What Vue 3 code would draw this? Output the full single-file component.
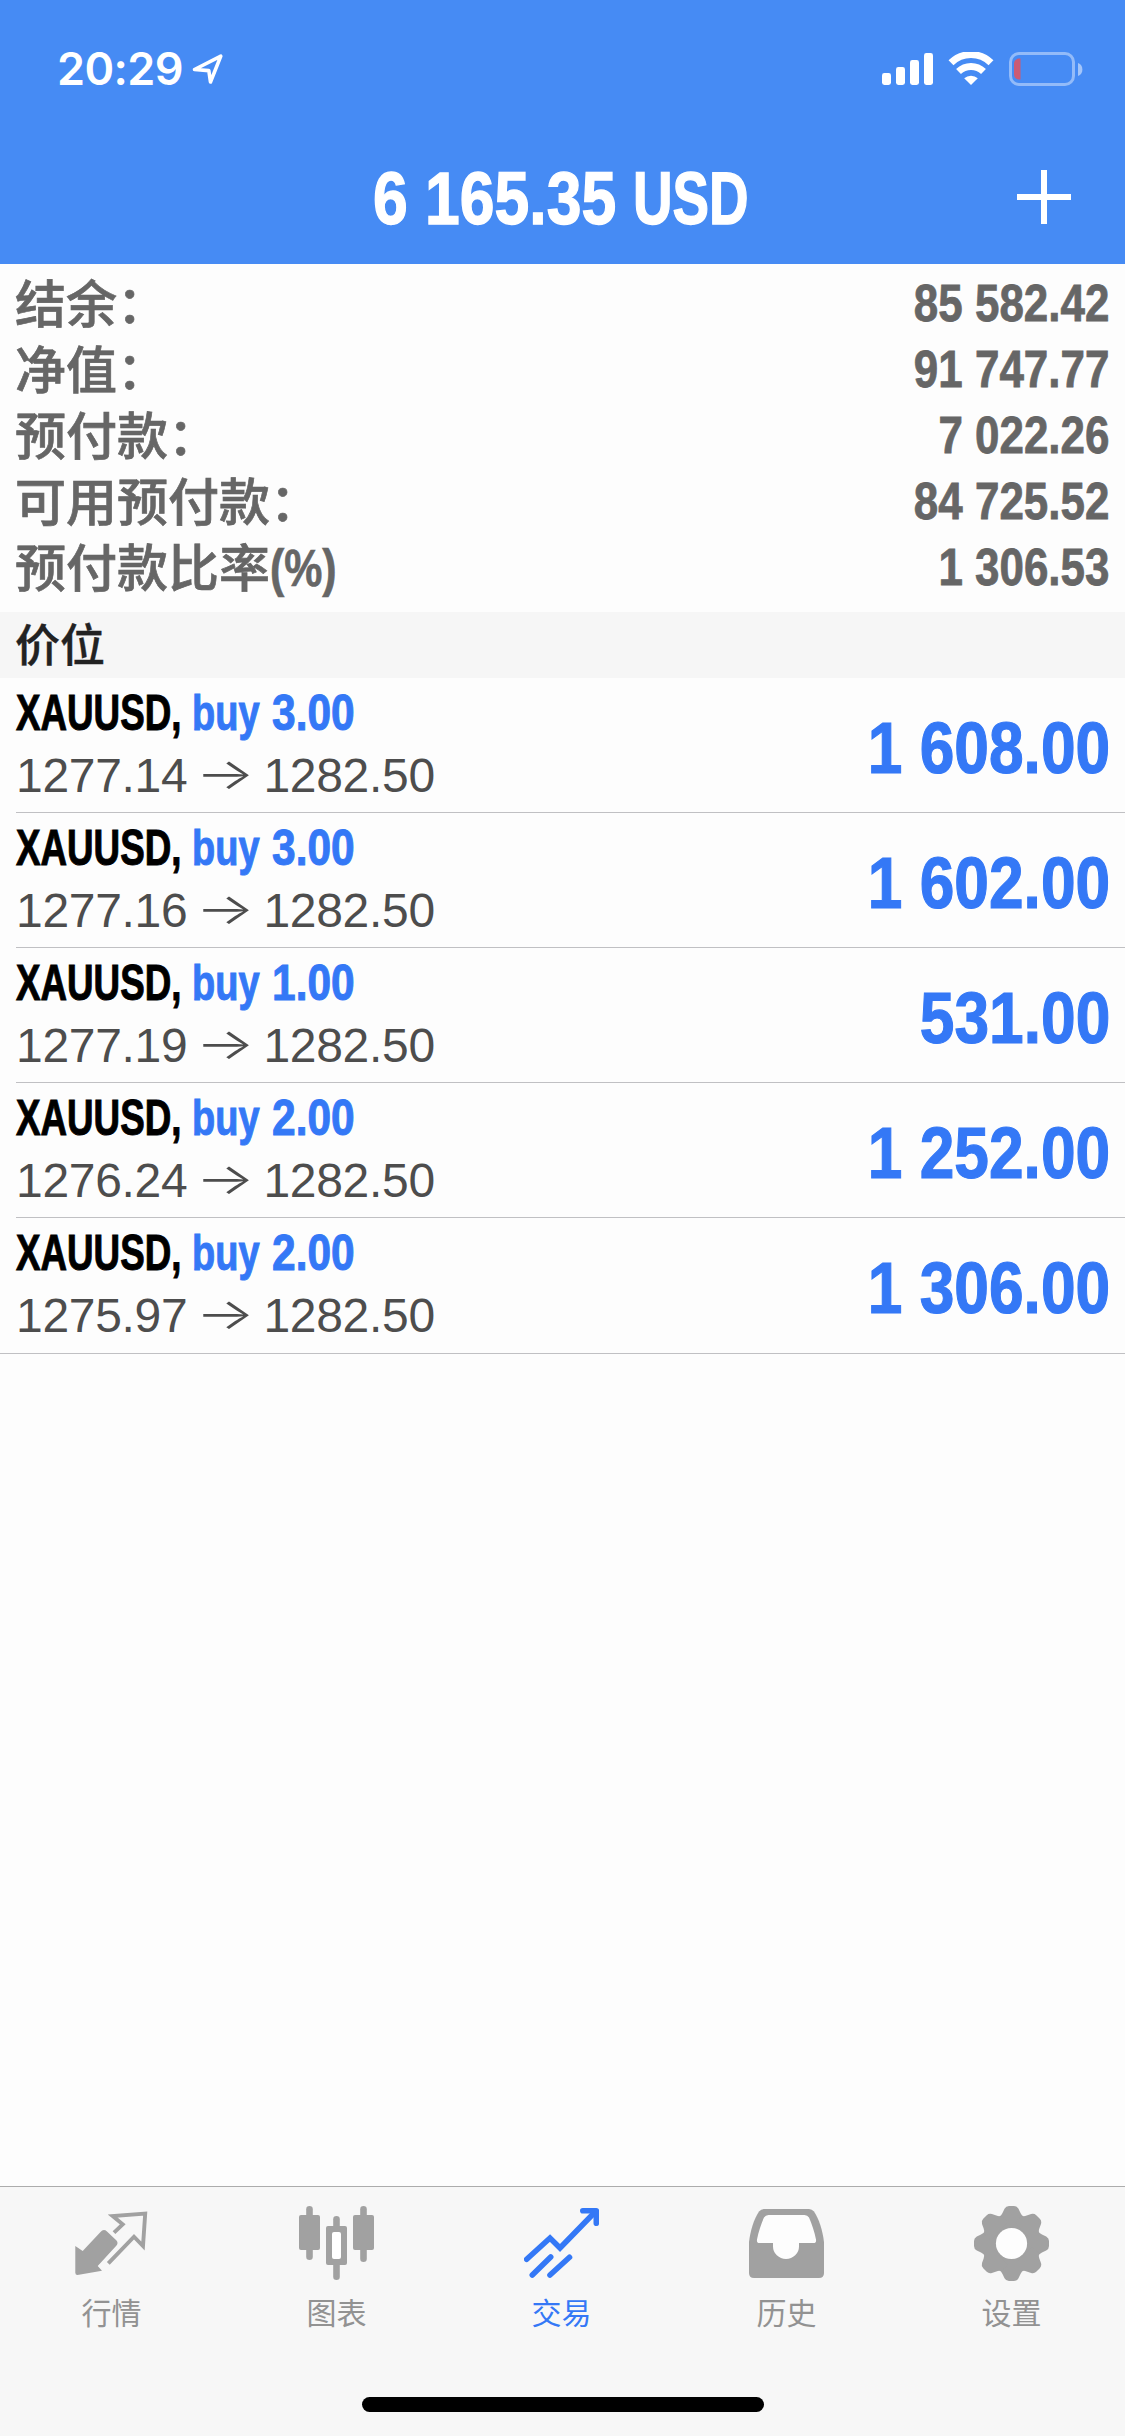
<script setup>
const summary = [
  { label: '结余：', value: '85 582.42' },
  { label: '净值：', value: '91 747.77' },
  { label: '预付款：', value: '7 022.26' },
  { label: '可用预付款：', value: '84 725.52' },
  { label: '预付款比率', suffix: '(%)', value: '1 306.53' },
]

const positions = [
  { volume: '3.00', open: '1277.14', current: '1282.50', profit: '1 608.00' },
  { volume: '3.00', open: '1277.16', current: '1282.50', profit: '1 602.00' },
  { volume: '1.00', open: '1277.19', current: '1282.50', profit: '531.00' },
  { volume: '2.00', open: '1276.24', current: '1282.50', profit: '1 252.00' },
  { volume: '2.00', open: '1275.97', current: '1282.50', profit: '1 306.00' },
]

const teeth = [0, 45, 90, 135, 180, 225, 270, 315]
</script>

<template>
  <div class="screen">
    <header class="header">
      <div class="status">
        <div class="status-left">
          <span class="time">20:29</span>
          <svg class="location" width="32" height="32" viewBox="0 0 32 32">
            <path d="M2.5 16.5 28.8 3.2 18.5 29 16.8 17.6Z" fill="none" stroke="#fff" stroke-width="3.6" stroke-linejoin="round" />
          </svg>
        </div>
        <div class="status-right">
          <svg width="52" height="34" viewBox="0 0 52 34" fill="#fff">
            <rect x="0" y="21" width="9" height="12" rx="2.4" />
            <rect x="14" y="15" width="9" height="18" rx="2.4" />
            <rect x="28" y="8" width="9" height="25" rx="2.4" />
            <rect x="42" y="1" width="9" height="32" rx="2.4" />
          </svg>
          <svg class="wifi" width="46" height="34" viewBox="0 0 46 34">
            <path d="M3 10.8A28.500 28.500 0 0 1 43 10.8" fill="none" stroke="#fff" stroke-width="7" />
            <path d="M10.5 19.6A18 18 0 0 1 35.5 19.6" fill="none" stroke="#fff" stroke-width="7" />
            <path d="M16.2 26.3A10 10 0 0 1 29.8 26.3L23 33Z" fill="#fff" />
          </svg>
          <svg class="battery" width="74" height="34" viewBox="0 0 74 34">
            <rect x="1.5" y="1.5" width="63" height="31" rx="8.5" fill="none" stroke="#fff" stroke-opacity=".42" stroke-width="3" />
            <path d="M69 11V24C72 23 73.4 20.500 73.4 17.500S72 12 69 11Z" fill="#fff" fill-opacity=".5" />
            <path d="M11.500 6.500V27.500H10Q5 27 5 22V12Q5 7 10 6.500Z" fill="#cc5b74" />
          </svg>
        </div>
      </div>
      <div class="nav">
        <h1 class="title">
          <span class="title-amount"><span class="digits">6 165.35</span></span>
          <span class="title-currency"><span class="letters">USD</span></span>
        </h1>
        <svg class="plus" width="54" height="54" viewBox="0 0 54 54" fill="#fff">
          <rect x="24" y="0" width="6" height="54" />
          <rect x="0" y="24" width="54" height="6" />
        </svg>
      </div>
    </header>

    <section class="summary">
      <div v-for="item in summary" :key="item.label" class="summary-row">
        <span class="summary-label">{{ item.label }}<span v-if="item.suffix" class="suffix">{{ item.suffix }}</span></span>
        <span class="summary-value">{{ item.value }}</span>
      </div>
    </section>

    <div class="section-title">价位</div>

    <ul class="positions">
      <li v-for="(p, i) in positions" :key="i" class="position">
        <div class="position-body">
          <div class="deal">
            <span class="symbol"><span class="letters">XAUUSD,</span></span>
            <span class="side"><span class="letters">buy</span></span>
            <span class="volume"><span class="digits">{{ p.volume }}</span></span>
          </div>
          <div class="prices">
            <span>{{ p.open }}</span>
            <span class="arrow">→</span>
            <span>{{ p.current }}</span>
          </div>
        </div>
        <span class="profit">{{ p.profit }}</span>
      </li>
    </ul>

    <footer class="footer">
      <nav class="tabs">
        <div class="tab">
          <svg width="75" height="75" viewBox="0 0 75 75">
            <g transform="translate(1 0)">
              <path d="M.3 40 7.700 45 25.500 26Q28.500 22.500 32 25.500L41.500 34.500Q43.500 37 41.500 39.500L22.700 60 27 64.700 2.500 69Q.3 69 .3 66.700Z" fill="#a1a1a1" />
              <path d="M39 26.700 47.700 18.300 37.700 10 70.200 7.600 68 40 59 30.700 33.300 57.300" fill="none" stroke="#a1a1a1" stroke-width="3.900" />
            </g>
          </svg>
          <span class="tab-label">行情</span>
        </div>
        <div class="tab">
          <svg width="75" height="75" viewBox="0 0 75 75" fill="#a1a1a1">
            <rect x="7.200" y="0" width="6.600" height="54" rx="3.300" />
            <rect x="0" y="9" width="21" height="35" rx="2" />
            <rect x="61.200" y="0" width="6.600" height="56" rx="3.300" />
            <rect x="54" y="9" width="21" height="35" rx="2" />
            <rect x="34.200" y="10" width="6.600" height="64" rx="3.300" />
            <rect x="27" y="20" width="21" height="39" rx="2" />
            <rect x="33" y="26" width="9" height="27" rx="2" fill="#fff" />
          </svg>
          <span class="tab-label">图表</span>
        </div>
        <div class="tab active">
          <svg width="75" height="75" viewBox="0 0 75 75" fill="none" stroke="#3478f6" stroke-width="5.600" stroke-linecap="round">
            <path d="M2.700 53.300 26 32 36 42 71.500 5.500" stroke-linejoin="miter" />
            <path d="M58.800 4.700H72.300V17.200" stroke-linejoin="round" />
            <path d="M8.300 69 26.700 51M26 69 45.500 51.300" />
          </svg>
          <span class="tab-label">交易</span>
        </div>
        <div class="tab">
          <svg width="75" height="75" viewBox="0 0 75 75">
            <path d="M0 36C1.500 24 5 13 10 5.500Q12 3 15 3H60Q63 3 65 5.500C70 13 73.500 24 75 36V67Q75 72 70 72H5Q0 72 0 67Z" fill="#a1a1a1" />
            <path d="M19.500 9H55.500Q58.500 9 60 11.500C63 18 65.500 26 67 33.500Q67.500 37 64.500 37H50V40.500A13 12.500 0 0 1 24 40.500V37H10.500Q7.500 37 8 33.500C9.500 26 12 18 15 11.500Q16.500 9 19.500 9Z" fill="#fdfdfd" />
          </svg>
          <span class="tab-label">历史</span>
        </div>
        <div class="tab">
          <svg width="75" height="75" viewBox="0 0 75 75">
            <g fill="#a1a1a1">
              <circle cx="37.500" cy="37.500" r="28.500" />
              <path
                v-for="angle in teeth"
                :key="angle"
                d="M25 11Q27.500 9.500 28.500 7L30.500 2.800Q32 0 35 0H40Q43 0 44.500 2.800L46.500 7Q47.500 9.500 50 11V20H25Z"
                :transform="`rotate(${angle} 37.5 37.5)`"
              />
            </g>
            <circle cx="37.500" cy="37.500" r="15.600" fill="#fdfdfd" />
          </svg>
          <span class="tab-label">设置</span>
        </div>
      </nav>
      <div class="home-indicator"></div>
    </footer>
  </div>
</template>

<style>
body {
  margin: 0;
  background: #fdfdfd;
}
</style>

<style scoped>
.screen {
  width: 1125px;
  height: 2436px;
  display: flex;
  flex-direction: column;
  overflow: hidden;
  background: #fdfdfd;
  font-family: "Liberation Sans", "Noto Sans CJK SC", sans-serif;
  white-space: nowrap;
}

.header {
  height: 264px;
  flex: none;
  background: #468bf4;
  color: #fff;
}

.status {
  height: 132px;
  box-sizing: border-box;
  padding: 52px 42px 0 57px;
  display: flex;
  justify-content: space-between;
  align-items: flex-start;
}

.status-left,
.status-right {
  display: flex;
  height: 34px;
  align-items: center;
}

.time {
  width: 135px;
  font: 600 45px/34px "Inter", sans-serif;
  letter-spacing: -0.6px;
}

.wifi {
  margin-left: 14px;
}

.battery {
  margin-left: 15px;
}

.nav {
  height: 132px;
  box-sizing: border-box;
  padding: 0 54px 0 373px;
  display: flex;
  align-items: center;
  justify-content: space-between;
}

.title {
  margin: 2px 0 0;
  display: flex;
  font-size: 73.5px;
  line-height: 84px;
  font-weight: 700;
  -webkit-text-stroke: 1.4px currentColor;
}

.title-amount {
  width: 260px;
}

.title-currency {
  width: 120px;
}

.digits,
.letters {
  display: inline-block;
  transform: scaleX(0.85);
  transform-origin: left center;
}

.letters {
  transform: scaleX(0.745);
}

.plus {
  margin-top: -2px;
}

.summary {
  flex: none;
  height: 348px;
  box-sizing: border-box;
  padding: 6px 16px 0 15px;
  color: #666;
}

.summary-row {
  height: 66px;
  display: flex;
  justify-content: space-between;
  align-items: center;
}

.summary-label {
  padding-top: 5px;
  font-size: 51px;
  line-height: 61px;
  font-weight: 500;
  -webkit-text-stroke: 0.7px currentColor;
}

.suffix {
  display: inline-block;
  font-weight: 700;
  transform: translateY(-1px) scaleX(0.84);
  transform-origin: left center;
}

.summary-value {
  font-size: 52px;
  line-height: 66px;
  font-weight: 700;
  -webkit-text-stroke: 0.8px currentColor;
  transform: scaleX(0.845);
  transform-origin: right center;
}

.section-title {
  flex: none;
  height: 66px;
  padding-left: 15px;
  background: #f6f6f6;
  color: #222;
  font: 500 45px/62px "Noto Sans CJK SC", sans-serif;
  -webkit-text-stroke: 0.4px currentColor;
}

.positions {
  margin: 0;
  padding: 0;
  list-style: none;
  border-bottom: 1px solid #c0c0c3;
}

.position {
  height: 134px;
  margin-left: 16px;
  padding-right: 15px;
  display: flex;
  justify-content: space-between;
  border-bottom: 1px solid #c0c0c3;
}

.position:last-child {
  border-bottom-color: transparent;
}

.position-body {
  padding-top: 4px;
}

.deal {
  display: flex;
  font-size: 50px;
  line-height: 62px;
  font-weight: 700;
  color: #3478f6;
  -webkit-text-stroke: 1px currentColor;
}

.symbol {
  width: 176px;
  color: #000;
}

.symbol .letters {
  transform: scaleX(0.735);
}

.side {
  width: 80px;
}

.side .letters {
  transform: scaleX(0.76);
}

.volume {
  width: 90px;
}

.prices {
  display: flex;
  font-size: 48px;
  line-height: 64px;
  letter-spacing: -0.3px;
  color: #4d4d4d;
}

.arrow {
  width: 76px;
  text-align: center;
  font-family: "Inter", sans-serif;
  font-weight: 300;
  transform: translate(0, -2px) scale(1.3, 0.9);
}

.profit {
  padding-top: 3px;
  font-size: 73px;
  line-height: 133px;
  font-weight: 700;
  color: #3478f6;
  -webkit-text-stroke: 1.2px currentColor;
  transform: scaleX(0.853);
  transform-origin: right center;
}

.footer {
  flex: none;
  height: 250px;
  box-sizing: border-box;
  margin-top: auto;
  border-top: 1px solid #acacac;
  background: #f7f7f7;
  display: flex;
  flex-direction: column;
  align-items: center;
}

.tabs {
  width: 100%;
  height: 210px;
  flex: none;
  display: flex;
}

.tab {
  flex: 1;
  box-sizing: border-box;
  padding: 19px 2px 0 0;
  display: flex;
  flex-direction: column;
  align-items: center;
  color: #929292;
}

.tab.active {
  color: #3478f6;
}

.tab-label {
  margin-top: 8px;
  font: 400 30px/44px "Noto Sans CJK SC", sans-serif;
}

.home-indicator {
  width: 402px;
  height: 15px;
  border-radius: 8px;
  background: #000;
}
</style>
